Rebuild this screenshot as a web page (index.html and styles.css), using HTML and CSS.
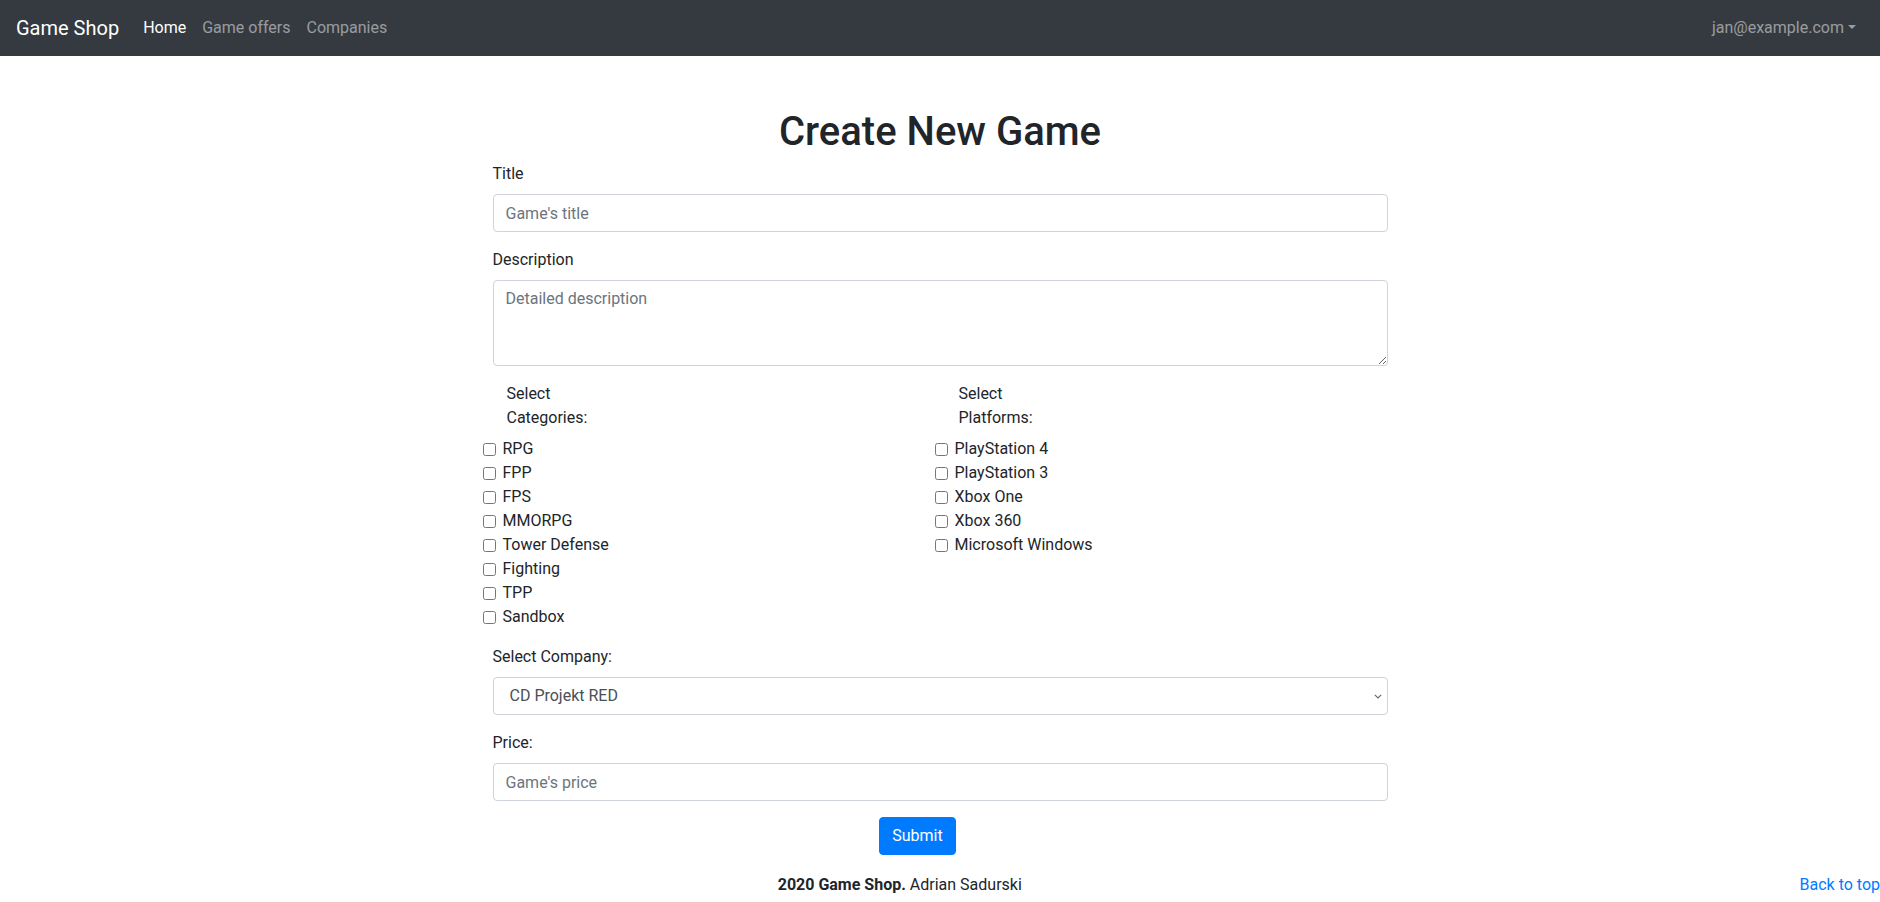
FILE: index.html
```html
<!DOCTYPE html>
<html lang="en">
<head>
<meta charset="utf-8">
<title>Create New Game - Game Shop</title>
<link rel="stylesheet" href="styles.css">
</head>
<body>
<nav class="navbar">
  <a class="brand" href="#">Game Shop</a>
  <ul class="nav">
    <li><a class="nav-link active" href="#">Home</a></li>
    <li><a class="nav-link" href="#">Game offers</a></li>
    <li><a class="nav-link" href="#">Companies</a></li>
  </ul>
  <div class="nav-right">
    <a class="nav-link dropdown-toggle" href="#">jan@example.com</a>
  </div>
</nav>

<main class="container">
  <h1 class="page-title">Create New Game</h1>
  <form class="game-form">
    <div class="form-group">
      <label class="field-label" for="title">Title</label>
      <input class="form-control" id="title" type="text" placeholder="Game's title">
    </div>
    <div class="form-group">
      <label class="field-label" for="desc">Description</label>
      <textarea class="form-control textarea" id="desc" rows="3" placeholder="Detailed description"></textarea>
    </div>
    <div class="check-row">
      <div class="check-col">
        <div class="check-title">Select Categories:</div>
        <label class="form-check"><input type="checkbox" class="check-input"><span>RPG</span></label>
        <label class="form-check"><input type="checkbox" class="check-input"><span>FPP</span></label>
        <label class="form-check"><input type="checkbox" class="check-input"><span>FPS</span></label>
        <label class="form-check"><input type="checkbox" class="check-input"><span>MMORPG</span></label>
        <label class="form-check"><input type="checkbox" class="check-input"><span>Tower Defense</span></label>
        <label class="form-check"><input type="checkbox" class="check-input"><span>Fighting</span></label>
        <label class="form-check"><input type="checkbox" class="check-input"><span>TPP</span></label>
        <label class="form-check"><input type="checkbox" class="check-input"><span>Sandbox</span></label>
      </div>
      <div class="check-col">
        <div class="check-title">Select Platforms:</div>
        <label class="form-check"><input type="checkbox" class="check-input"><span>PlayStation 4</span></label>
        <label class="form-check"><input type="checkbox" class="check-input"><span>PlayStation 3</span></label>
        <label class="form-check"><input type="checkbox" class="check-input"><span>Xbox One</span></label>
        <label class="form-check"><input type="checkbox" class="check-input"><span>Xbox 360</span></label>
        <label class="form-check"><input type="checkbox" class="check-input"><span>Microsoft Windows</span></label>
      </div>
    </div>
    <div class="form-group">
      <label class="field-label" for="company">Select Company:</label>
      <div class="select-wrap">
        <select class="form-control select" id="company">
          <option>CD Projekt RED</option>
          <option>Ubisoft</option>
          <option>Blizzard Entertainment</option>
        </select>
        <svg class="select-arrow" width="8" height="5" viewBox="0 0 8 5" aria-hidden="true">
          <path d="M0.8 0.8 L4 4 L7.2 0.8" fill="none" stroke="#6b6b6b" stroke-width="1.2"/>
        </svg>
      </div>
    </div>
    <div class="form-group">
      <label class="field-label" for="price">Price:</label>
      <input class="form-control" id="price" type="text" placeholder="Game's price">
    </div>
    <div class="submit-wrap">
      <button class="btn-primary" type="submit">Submit</button>
    </div>
  </form>
</main>

<footer class="footer">
  <p class="footer-text"><a class="back-top" href="#">Back to top</a><strong>2020 Game Shop.</strong> Adrian Sadurski</p>
</footer>
</body>
</html>
```

FILE: styles.css
```css
* {
  box-sizing: border-box;
}

html, body {
  margin: 0;
  padding: 0;
}

body {
  font-family: Roboto, "Helvetica Neue", Arial, sans-serif;
  font-size: 16px;
  line-height: 1.5;
  color: #212529;
  background: #fff;
}

a {
  text-decoration: none;
}

/* Navbar */
.navbar {
  display: flex;
  align-items: center;
  height: 56px;
  padding: 8px 16px;
  background: #343a40;
}

.brand {
  color: #fff;
  font-size: 20px;
  line-height: 30px;
  padding: 5px 0;
  margin-right: 16px;
}

.nav {
  display: flex;
  list-style: none;
  margin: 0;
  padding: 0;
}

.nav-link {
  display: block;
  padding: 8px;
  color: rgba(255, 255, 255, 0.5);
  line-height: 24px;
}

.nav-link.active {
  color: #fff;
}

.nav-right {
  margin-left: auto;
}

.dropdown-toggle::after {
  display: inline-block;
  margin-left: 0.255em;
  vertical-align: 0.255em;
  content: "";
  border-top: 0.3em solid;
  border-right: 0.3em solid transparent;
  border-left: 0.3em solid transparent;
  border-bottom: 0;
}

/* Main */
.container {
  width: 895px;
  margin: 0 auto;
}

.page-title {
  margin: 52px 0 6px;
  font-size: 40px;
  font-weight: 500;
  line-height: 1.2;
  text-align: center;
}

.form-group {
  margin-bottom: 16px;
}

.field-label {
  display: block;
  margin-bottom: 8px;
  line-height: 24px;
}

.form-control {
  display: block;
  width: 100%;
  height: 38px;
  padding: 6px 12px;
  font-family: inherit;
  font-size: 16px;
  line-height: 1.5;
  color: #495057;
  background: #fff;
  border: 1px solid #ced4da;
  border-radius: 4px;
}

.form-control::placeholder {
  color: #6c757d;
  opacity: 1;
}

.textarea {
  height: 86px;
  resize: vertical;
}

.select-wrap {
  position: relative;
}

.select {
  appearance: none;
  -webkit-appearance: none;
  padding-left: 16px;
  padding-right: 28px;
  color: #495057;
}

.select-arrow {
  position: absolute;
  right: 6px;
  top: 17px;
  pointer-events: none;
}

/* Checkbox columns */
.check-row {
  display: flex;
  margin-left: -10px;
  margin-bottom: 16px;
}

.check-col {
  width: 452px;
  display: flex;
  flex-direction: column;
}

.check-title {
  width: 95px;
  margin-left: 24px;
  margin-bottom: 7px;
  line-height: 24px;
}

.form-check {
  display: flex;
  align-items: center;
  height: 24px;
  line-height: 24px;
}

.check-input {
  width: 13px;
  height: 13px;
  margin: 0 7px 0 0;
  flex: none;
}

/* Submit */
.submit-wrap {
  display: flex;
  justify-content: center;
  padding-right: 45px;
}

.btn-primary {
  display: inline-block;
  height: 38px;
  padding: 6px 12px;
  font-family: inherit;
  font-size: 16px;
  line-height: 1.5;
  color: #fff;
  background: #007bff;
  border: 1px solid #007bff;
  border-radius: 4px;
  cursor: pointer;
}

/* Footer */
.footer {
  padding-top: 18px;
}

.footer-text {
  margin: 0;
  line-height: 24px;
  text-align: center;
}

.back-top {
  float: right;
  color: #007bff;
}
```
